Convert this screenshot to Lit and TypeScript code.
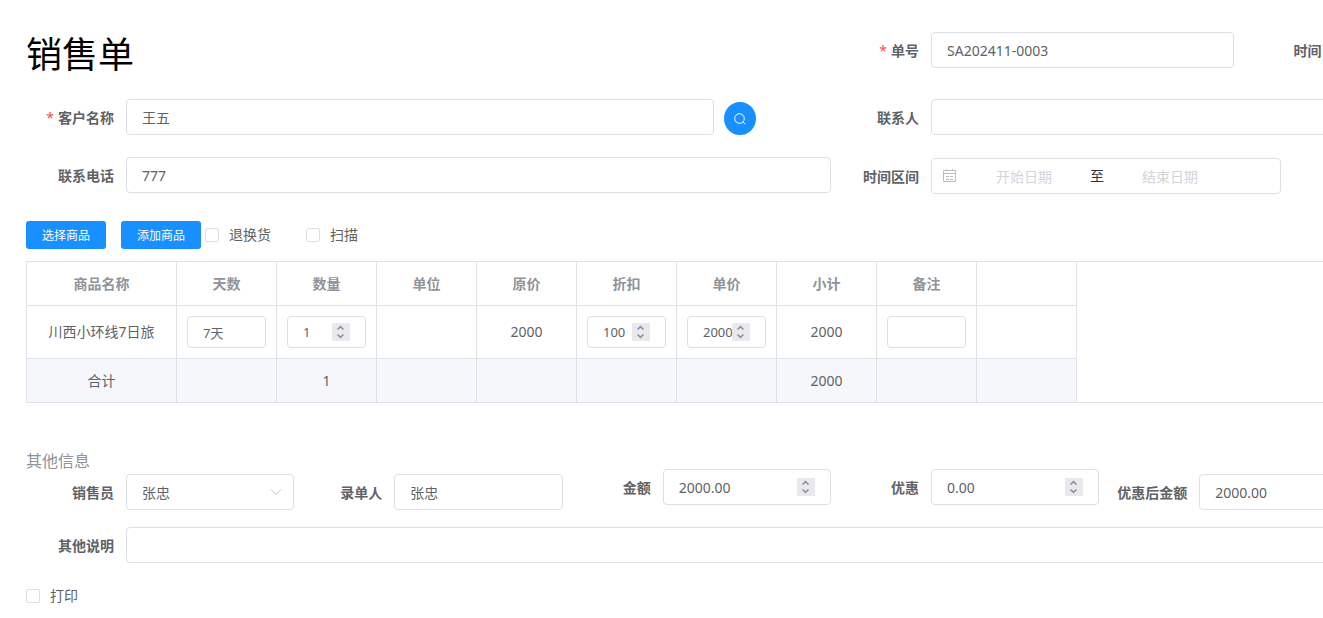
import { LitElement, html, css, nothing } from "lit";
import { customElement, property } from "lit/decorators.js";

const controls = css`
  * {
    box-sizing: border-box;
  }
  input,
  select,
  button {
    margin: 0;
    font-family: inherit;
  }
  .input {
    display: block;
    width: 100%;
    min-width: 0;
    height: 36px;
    padding: 0 15px;
    border: 1px solid #dcdfe6;
    border-radius: 4px;
    background: #fff;
    color: #606266;
    font-size: 14px;
    outline: none;
    appearance: none;
  }
  .input.small {
    height: 32px;
    font-size: 13px;
  }
  .input:focus {
    border-color: #1890ff;
  }
`;

@customElement("number-box")
class NumberBox extends LitElement {
  @property() value = "";
  @property() label = "";
  @property({ type: Boolean }) small = false;

  static styles = [
    controls,
    css`
      :host {
        display: block;
        flex: 1;
        min-width: 0;
      }
      .box {
        position: relative;
        display: flex;
        align-items: center;
      }
      .input {
        appearance: textfield;
      }
      .input::-webkit-inner-spin-button {
        appearance: none;
        margin: 0;
      }
      .spinner {
        position: absolute;
        right: 16px;
        display: flex;
        flex-direction: column;
        width: 18px;
        background: #e9e9ed;
      }
      .step {
        display: flex;
        align-items: center;
        justify-content: center;
        height: 9px;
        padding: 0;
        border: 0;
        background: none;
      }
      .step svg {
        display: block;
        fill: none;
        stroke: #8f8f9d;
        stroke-width: 1.6;
      }
    `,
  ];

  private step(delta: number) {
    const input = this.renderRoot.querySelector("input")!;
    if (delta > 0) input.stepUp();
    else input.stepDown();
  }

  render() {
    return html`
      <div class="box">
        <input
          class="input ${this.small ? "small" : ""}"
          type="number"
          step="any"
          aria-label=${this.label}
          .value=${this.value}
        />
        <span class="spinner">
          <button class="step" type="button" aria-label="增加" @click=${() => this.step(1)}>
            <svg width="10" height="9" viewBox="0 0 10 9"><path d="M1.5 6.5 4.5 3.6 7.5 6.5" /></svg>
          </button>
          <button class="step" type="button" aria-label="减少" @click=${() => this.step(-1)}>
            <svg width="10" height="9" viewBox="0 0 10 9"><path d="M1.5 2.5 4.5 5.4 7.5 2.5" /></svg>
          </button>
        </span>
      </div>
    `;
  }
}

const columns = ["商品名称", "天数", "数量", "单位", "原价", "折扣", "单价", "小计", "备注", ""];
const totals = ["合计", "", "1", "", "", "", "", "2000", "", ""];

@customElement("app-root")
class AppRoot extends LitElement {
  static styles = [
    controls,
    css`
      :host {
        display: block;
        overflow-x: clip;
        background: #fff;
        color: #606266;
        font: 14px/20px "Noto Sans", "Noto Sans CJK SC", sans-serif;
      }
      .page {
        min-width: 1662px;
        padding: 32px 26px 10px;
      }
      .row {
        display: grid;
        grid-template-columns: repeat(24, 1fr);
        align-items: start;
        margin-bottom: 22px;
      }
      .row.phone {
        margin-bottom: 27px;
      }
      .row.amounts {
        min-height: 41px;
        margin-bottom: 17px;
      }
      .row.note {
        margin-bottom: 23px;
      }
      .span4 {
        grid-column: span 4;
      }
      .span6 {
        grid-column: span 6;
      }
      .span12 {
        grid-column: span 12;
      }
      .span24 {
        grid-column: span 24;
      }
      .low {
        align-self: end;
      }
      h1 {
        margin: 0;
        color: #000;
        font-size: 36px;
        font-weight: 400;
        line-height: 45px;
      }
      h2 {
        margin: 50px 0 0;
        color: #909399;
        font-size: 16px;
        font-weight: 400;
        line-height: 16px;
      }
      .field {
        display: flex;
        align-items: center;
      }
      .label {
        flex: none;
        width: 100px;
        padding: 2px 12px 0 0;
        font-weight: 700;
        text-align: right;
        white-space: nowrap;
      }
      .required::before {
        content: "*";
        margin-right: 4px;
        color: #ff4949;
        font-weight: 400;
      }
      .search {
        display: flex;
        align-items: center;
        justify-content: center;
        flex: none;
        align-self: end;
        width: 32px;
        height: 33px;
        margin: 0 75px 0 10px;
        padding: 0;
        border: 0;
        border-radius: 50%;
        background: #1890ff;
      }
      .search svg {
        fill: none;
        stroke: #fff;
      }
      .range {
        display: flex;
        align-items: center;
        width: 350px;
        height: 36px;
        margin-top: 1px;
        padding: 0 10px;
        border: 1px solid #dcdfe6;
        border-radius: 4px;
      }
      .range svg {
        flex: none;
        margin-right: 4px;
        fill: none;
        stroke: #b8bbc8;
      }
      .date {
        width: 128px;
        min-width: 0;
        padding: 0;
        border: 0;
        outline: none;
        background: none;
        color: #606266;
        font-size: 14px;
        text-align: center;
      }
      .date::placeholder {
        color: #d3d5da;
      }
      .to {
        width: 18px;
        color: #303133;
        text-align: center;
      }
      .toolbar {
        display: flex;
        align-items: center;
        margin-bottom: 12px;
      }
      .primary {
        height: 28px;
        margin-right: 15px;
        padding: 0 16px;
        border: 0;
        border-radius: 3px;
        background: #1890ff;
        color: #fff;
        font-size: 12px;
      }
      .primary + .primary {
        margin-right: 4px;
      }
      .check {
        display: inline-flex;
        align-items: center;
        gap: 10px;
        margin-right: 35px;
      }
      .check input {
        width: 14px;
        height: 14px;
        border: 1px solid #dcdfe6;
        border-radius: 2px;
        background: #fff;
        appearance: none;
      }
      .check input:checked {
        border-color: #1890ff;
        background: #1890ff;
      }
      .goods {
        border: 1px solid #dfe2e8;
        border-right: 0;
      }
      table {
        table-layout: fixed;
        width: 1050px;
        border-spacing: 0;
      }
      .name {
        width: 150px;
      }
      th,
      td {
        height: 44px;
        padding: 0 10px;
        border-right: 1px solid #dfe2e8;
        border-bottom: 1px solid #dfe2e8;
        text-align: center;
        white-space: nowrap;
      }
      th {
        color: #909399;
        font-weight: 700;
      }
      tbody td {
        height: 53px;
      }
      tfoot td {
        height: 43px;
        border-bottom: 0;
        background: #f5f7fa;
      }
      .select {
        position: relative;
        flex: 1;
        display: flex;
        align-items: center;
      }
      .select svg {
        position: absolute;
        right: 12px;
        fill: none;
        stroke: #c0c4cc;
        pointer-events: none;
      }
    `,
  ];

  private small(label: string, value = "") {
    return html`<input class="input small" type="text" aria-label=${label} .value=${value} />`;
  }

  private count(label: string, value: string) {
    return html`<number-box small label=${label} value=${value}></number-box>`;
  }

  private text(id: string, label: string, span: string, value = "", required = false, after: unknown = nothing) {
    return html`
      <div class="field ${span}">
        <label class="label ${required ? "required" : ""}" for=${id}>${label}</label>
        <input class="input" id=${id} type="text" .value=${value} />
        ${after}
      </div>
    `;
  }

  private amount(label: string, value: string) {
    return html`
      <div class="field span4">
        <span class="label">${label}</span>
        <number-box label=${label} value=${value}></number-box>
      </div>
    `;
  }

  private check(label: string) {
    return html`<label class="check"><input type="checkbox" />${label}</label>`;
  }

  render() {
    const search = html`
      <button class="search" type="button" aria-label="搜索">
        <svg width="14" height="14" viewBox="0 0 14 14">
          <circle cx="6.5" cy="6.5" r="4.8" />
          <path d="m10 10 2.2 2.2" />
        </svg>
      </button>
    `;
    const cells = [
      "川西小环线7日旅",
      this.small("天数", "7天"),
      this.count("数量", "1"),
      "",
      "2000",
      this.count("折扣", "100"),
      this.count("单价", "2000"),
      "2000",
      this.small("备注"),
      "",
    ];
    return html`
      <main class="page">
        <div class="row">
          <h1 class="span12">销售单</h1>
          ${this.text("number", "单号", "span6", "SA202411-0003", true)}
          ${this.text("time", "时间", "span6")}
        </div>
        <div class="row">
          ${this.text("customer", "客户名称", "span12", "王五", true, search)}
          ${this.text("contact", "联系人", "span12")}
        </div>
        <div class="row phone">
          ${this.text("phone", "联系电话", "span12", "777")}
          <div class="field span12">
            <label class="label" for="start">时间区间</label>
            <div class="range">
              <svg width="14" height="14" viewBox="0 0 14 14">
                <path d="M1.5 1.5h12v11h-12zM1.5 4.5h12M4.5 0v2M10.5 0v2M4 7.5h3M8 7.5h3M4 10.5h3M8 10.5h3" />
              </svg>
              <input class="date" id="start" type="text" placeholder="开始日期" />
              <span class="to">至</span>
              <input class="date" type="text" aria-label="结束日期" placeholder="结束日期" />
            </div>
          </div>
        </div>
        <div class="toolbar">
          <button class="primary" type="button">选择商品</button>
          <button class="primary" type="button">添加商品</button>
          ${this.check("退换货")} ${this.check("扫描")}
        </div>
        <div class="goods">
          <table>
            <thead>
              <tr>
                ${columns.map((c, i) => html`<th class=${i === 0 ? "name" : ""} scope="col">${c}</th>`)}
              </tr>
            </thead>
            <tbody>
              <tr>
                ${cells.map((c) => html`<td>${c}</td>`)}
              </tr>
            </tbody>
            <tfoot>
              <tr>
                ${totals.map((c) => html`<td>${c}</td>`)}
              </tr>
            </tfoot>
          </table>
        </div>
        <h2>其他信息</h2>
        <div class="row amounts">
          <div class="field span4 low">
            <label class="label" for="seller">销售员</label>
            <div class="select">
              <select class="input" id="seller">
                <option>张忠</option>
              </select>
              <svg width="12" height="8" viewBox="0 0 12 8"><path d="m1 1.5 5 5 5-5" /></svg>
            </div>
          </div>
          ${this.text("recorder", "录单人", "span4 low", "张忠")}
          ${this.amount("金额", "2000.00")}
          ${this.amount("优惠", "0.00")}
          ${this.text("final", "优惠后金额", "span4 low", "2000.00")}
        </div>
        <div class="row note">${this.text("note", "其他说明", "span24")}</div>
        ${this.check("打印")}
      </main>
    `;
  }
}
